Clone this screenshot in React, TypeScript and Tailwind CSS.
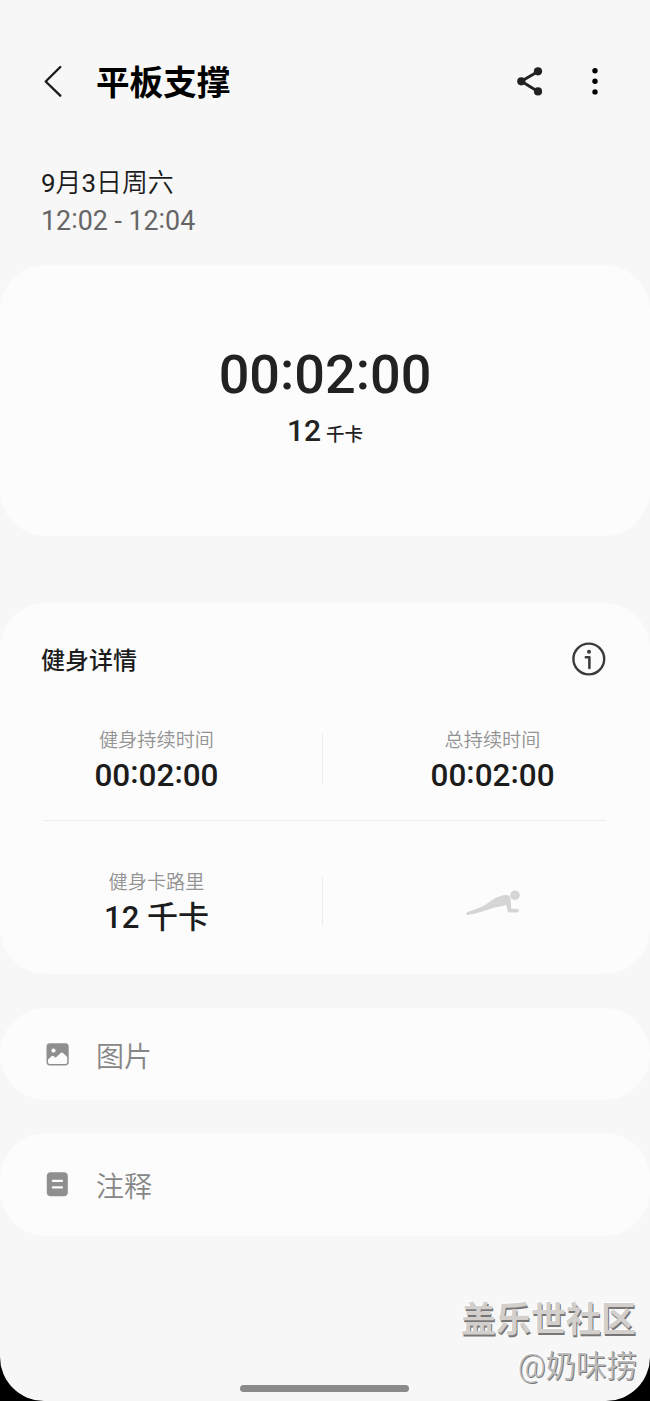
import { Fragment, type ReactNode } from 'react'

const stats = [
  { label: '健身持续时间', value: <Time value="00:02:00" /> },
  { label: '总持续时间', value: <Time value="00:02:00" /> },
]

// Clock value with the colons centred on the digits
function Time({ value }: { value: string }) {
  return (
    <>
      {value.split(':').map((part, idx) => (
        <Fragment key={idx}>
          {idx > 0 && <span className="inline-block -translate-y-[0.08em]">:</span>}
          {part}
        </Fragment>
      ))}
    </>
  )
}

function BackIcon() {
  return (
    <svg width="20" height="34" viewBox="0 0 20 34" fill="none" stroke="#1c1c1c" strokeWidth="2.4" strokeLinecap="round" strokeLinejoin="round">
      <path d="M17.3 3 2.7 17.5l14.6 14.2" />
    </svg>
  )
}

function ShareIcon() {
  return (
    <svg width="28" height="30" viewBox="0 0 28 30" fill="#222">
      <path d="M21 5.5 4.3 15.3 21 25.4" fill="none" stroke="#222" strokeWidth="2.9" />
      <circle cx="4.3" cy="15.3" r="4.1" />
      <circle cx="21" cy="5.3" r="4.1" />
      <circle cx="21" cy="25.4" r="4.1" />
    </svg>
  )
}

function MoreIcon() {
  return (
    <svg width="8" height="30" viewBox="0 0 8 30" fill="#000">
      <circle cx="4" cy="4.7" r="2.7" />
      <circle cx="4" cy="15.3" r="2.7" />
      <circle cx="4" cy="25.9" r="2.7" />
    </svg>
  )
}

function InfoIcon() {
  return (
    <svg width="34" height="34" viewBox="0 0 34 34" fill="none" stroke="#3a3a3a">
      <circle cx="16.8" cy="17" r="15.4" strokeWidth="2.4" />
      <circle cx="17" cy="9.8" r="2" fill="#3a3a3a" stroke="none" />
      <path d="M13.8 15.2h3.6V26" strokeWidth="2.5" strokeLinecap="round" strokeLinejoin="round" />
    </svg>
  )
}

function PlankIcon() {
  return (
    <svg width="54" height="26" viewBox="0 0 54 26" fill="#d5d5d5">
      <circle cx="49" cy="5.2" r="4.8" />
      <path d="M1.7 22 C8 19.7 14 18 19 15 C24 11.7 28 8 34 6.3 C38 5 41.5 4.4 43.3 6 C44.7 7.3 44.8 9 44.8 11 L45.2 18.8 H51 C53.3 18.8 53.5 22.4 51 22.4 H43.5 C42.2 22.4 41.8 21.6 41.6 20.4 L40.3 14.8 C36.5 16.6 32.5 16.8 28.5 17.6 C21 20 12 23.5 2 25 C-.2 25.1-.1 22.5 1.7 22Z" />
    </svg>
  )
}

function PictureIcon() {
  return (
    <svg width="23" height="23" viewBox="0 0 23 23">
      <rect x=".5" y=".3" width="22.2" height="22.2" rx="3.4" fill="#8f8f8f" />
      <circle cx="7.5" cy="7.6" r="2.1" fill="#fcfcfc" />
      <path d="M2 16.5 5.8 13Q6.8 12.2 7.8 13.2L9.6 14.8 15 9.8Q16 9 17 10L21.2 14V19.3Q21.2 21 19.5 21H3.7Q2 21 2 19.3Z" fill="#fcfcfc" />
    </svg>
  )
}

function NoteIcon() {
  return (
    <svg width="22" height="25" viewBox="0 0 22 25">
      <rect x=".8" y=".3" width="21" height="24" rx="4" fill="#8f8f8f" />
      <path d="M6.8 8.9h9.2M6.8 15.4h9.2" stroke="#fcfcfc" strokeWidth="2.1" strokeLinecap="round" />
    </svg>
  )
}

function Stat({ label, value }: { label: string; value: ReactNode }) {
  return (
    <div className="flex flex-col items-center">
      <p className="h-6 text-[19.2px] leading-6 font-[350] text-[#939393]">{label}</p>
      <p className="mt-[3px] h-10 text-[31.5px] leading-10 font-medium whitespace-pre text-[#1c1c1c]">{value}</p>
    </div>
  )
}

function Row({ icon, label, className }: { icon: ReactNode; label: string; className: string }) {
  return (
    <section className={`flex items-center rounded-[46px] bg-[#fcfcfc] pl-[46px] ${className}`}>
      <div className="w-[50px]">{icon}</div>
      <span className="pt-[7px] text-[28px] leading-10 font-[350] text-[#868686]">{label}</span>
    </section>
  )
}

export default function App() {
  return (
    <div className="h-[1401px] w-[650px] bg-black font-[Roboto,'Noto_Sans_CJK_SC',sans-serif]">
      <div className="relative flex h-full flex-col overflow-hidden rounded-b-[44px] bg-[#f7f7f7]">
        {/* Header */}
        <header className="mt-[51px] flex h-[60px] shrink-0 items-center pr-[51px] pl-[43px]">
          <BackIcon />
          <h1 className="ml-[33px] flex-1 pt-[6px] text-[33.6px] leading-[60px] font-bold text-black">平板支撑</h1>
          <ShareIcon />
          <div className="ml-[46px]">
            <MoreIcon />
          </div>
        </header>

        {/* Date */}
        <div className="mt-[53px] h-[101px] shrink-0 pl-[41px]">
          <p className="text-[25.9px] leading-[38px] font-[350] text-[#1c1c1c]">
            <span className="font-normal">9</span>月<span className="font-normal">3</span>日周六
          </p>
          <p className="text-[26.8px] leading-[38px] text-[#666]">
            <Time value="12:02 - 12:04" />
          </p>
        </div>

        {/* Summary */}
        <section className="flex h-[271px] shrink-0 flex-col items-center rounded-[46px] bg-[#fcfcfc] pt-[78px] font-medium text-[#222]">
          <p className="text-[54px] leading-[64px]">
            <Time value="00:02:00" />
          </p>
          <p className="mt-[4px] flex h-10 items-baseline gap-[5px] leading-10">
            <span className="text-[30px]">12</span>
            <span className="text-[18.5px]">千卡</span>
          </p>
        </section>

        {/* Details */}
        <section className="mt-[67px] h-[371px] shrink-0 rounded-[46px] bg-[#fcfcfc] pt-[35px]">
          <div className="flex h-[42px] items-center justify-between pr-[44px] pl-[41px]">
            <h2 className="pt-[3px] text-[24px] leading-[42px] font-medium text-[#1c1c1c]">健身详情</h2>
            <InfoIcon />
          </div>
          <div className="mx-[44px] mt-[49px] grid h-[92px] grid-cols-[225px_1fr] border-b border-[#ececec]">
            <Stat {...stats[0]} />
            <div className="flex">
              <div className="mt-[5px] ml-[53px] h-[49px] w-px bg-[#ececec]" />
              <div className="ml-[107.5px]">
                <Stat {...stats[1]} />
              </div>
            </div>
          </div>
          <div className="mx-[44px] mt-[50px] grid grid-cols-[225px_1fr]">
            <Stat label="健身卡路里" value={<span className="text-[31px]">12 千卡</span>} />
            <div className="flex">
              <div className="mt-[6px] ml-[53px] h-[49px] w-px bg-[#ececec]" />
              <div className="mt-[19px] ml-[143px]">
                <PlankIcon />
              </div>
            </div>
          </div>
        </section>

        <Row icon={<PictureIcon />} label="图片" className="mt-[34px] h-[92px] shrink-0" />
        <Row icon={<NoteIcon />} label="注释" className="mt-[33px] h-[103px] shrink-0" />

        <div className="mt-auto mb-[9px] ml-[240px] h-[7px] w-[169px] rounded-full bg-[#8a8a8a]" />

        {/* Watermark */}
        <div className="absolute right-[13px] bottom-[11px] text-right">
          <p className="mr-px text-[35px] leading-[46px] font-bold text-[#d2cfcc] [text-shadow:1px_2px_0_#777,-1px_-1px_0_#fff]">盖乐世社区</p>
          <p className="text-[30.5px] leading-[46px] font-[350] text-[#bbb] [text-shadow:1px_1px_0_#777,-1px_-1px_0_#fff]">@奶味捞</p>
        </div>
      </div>
    </div>
  )
}
